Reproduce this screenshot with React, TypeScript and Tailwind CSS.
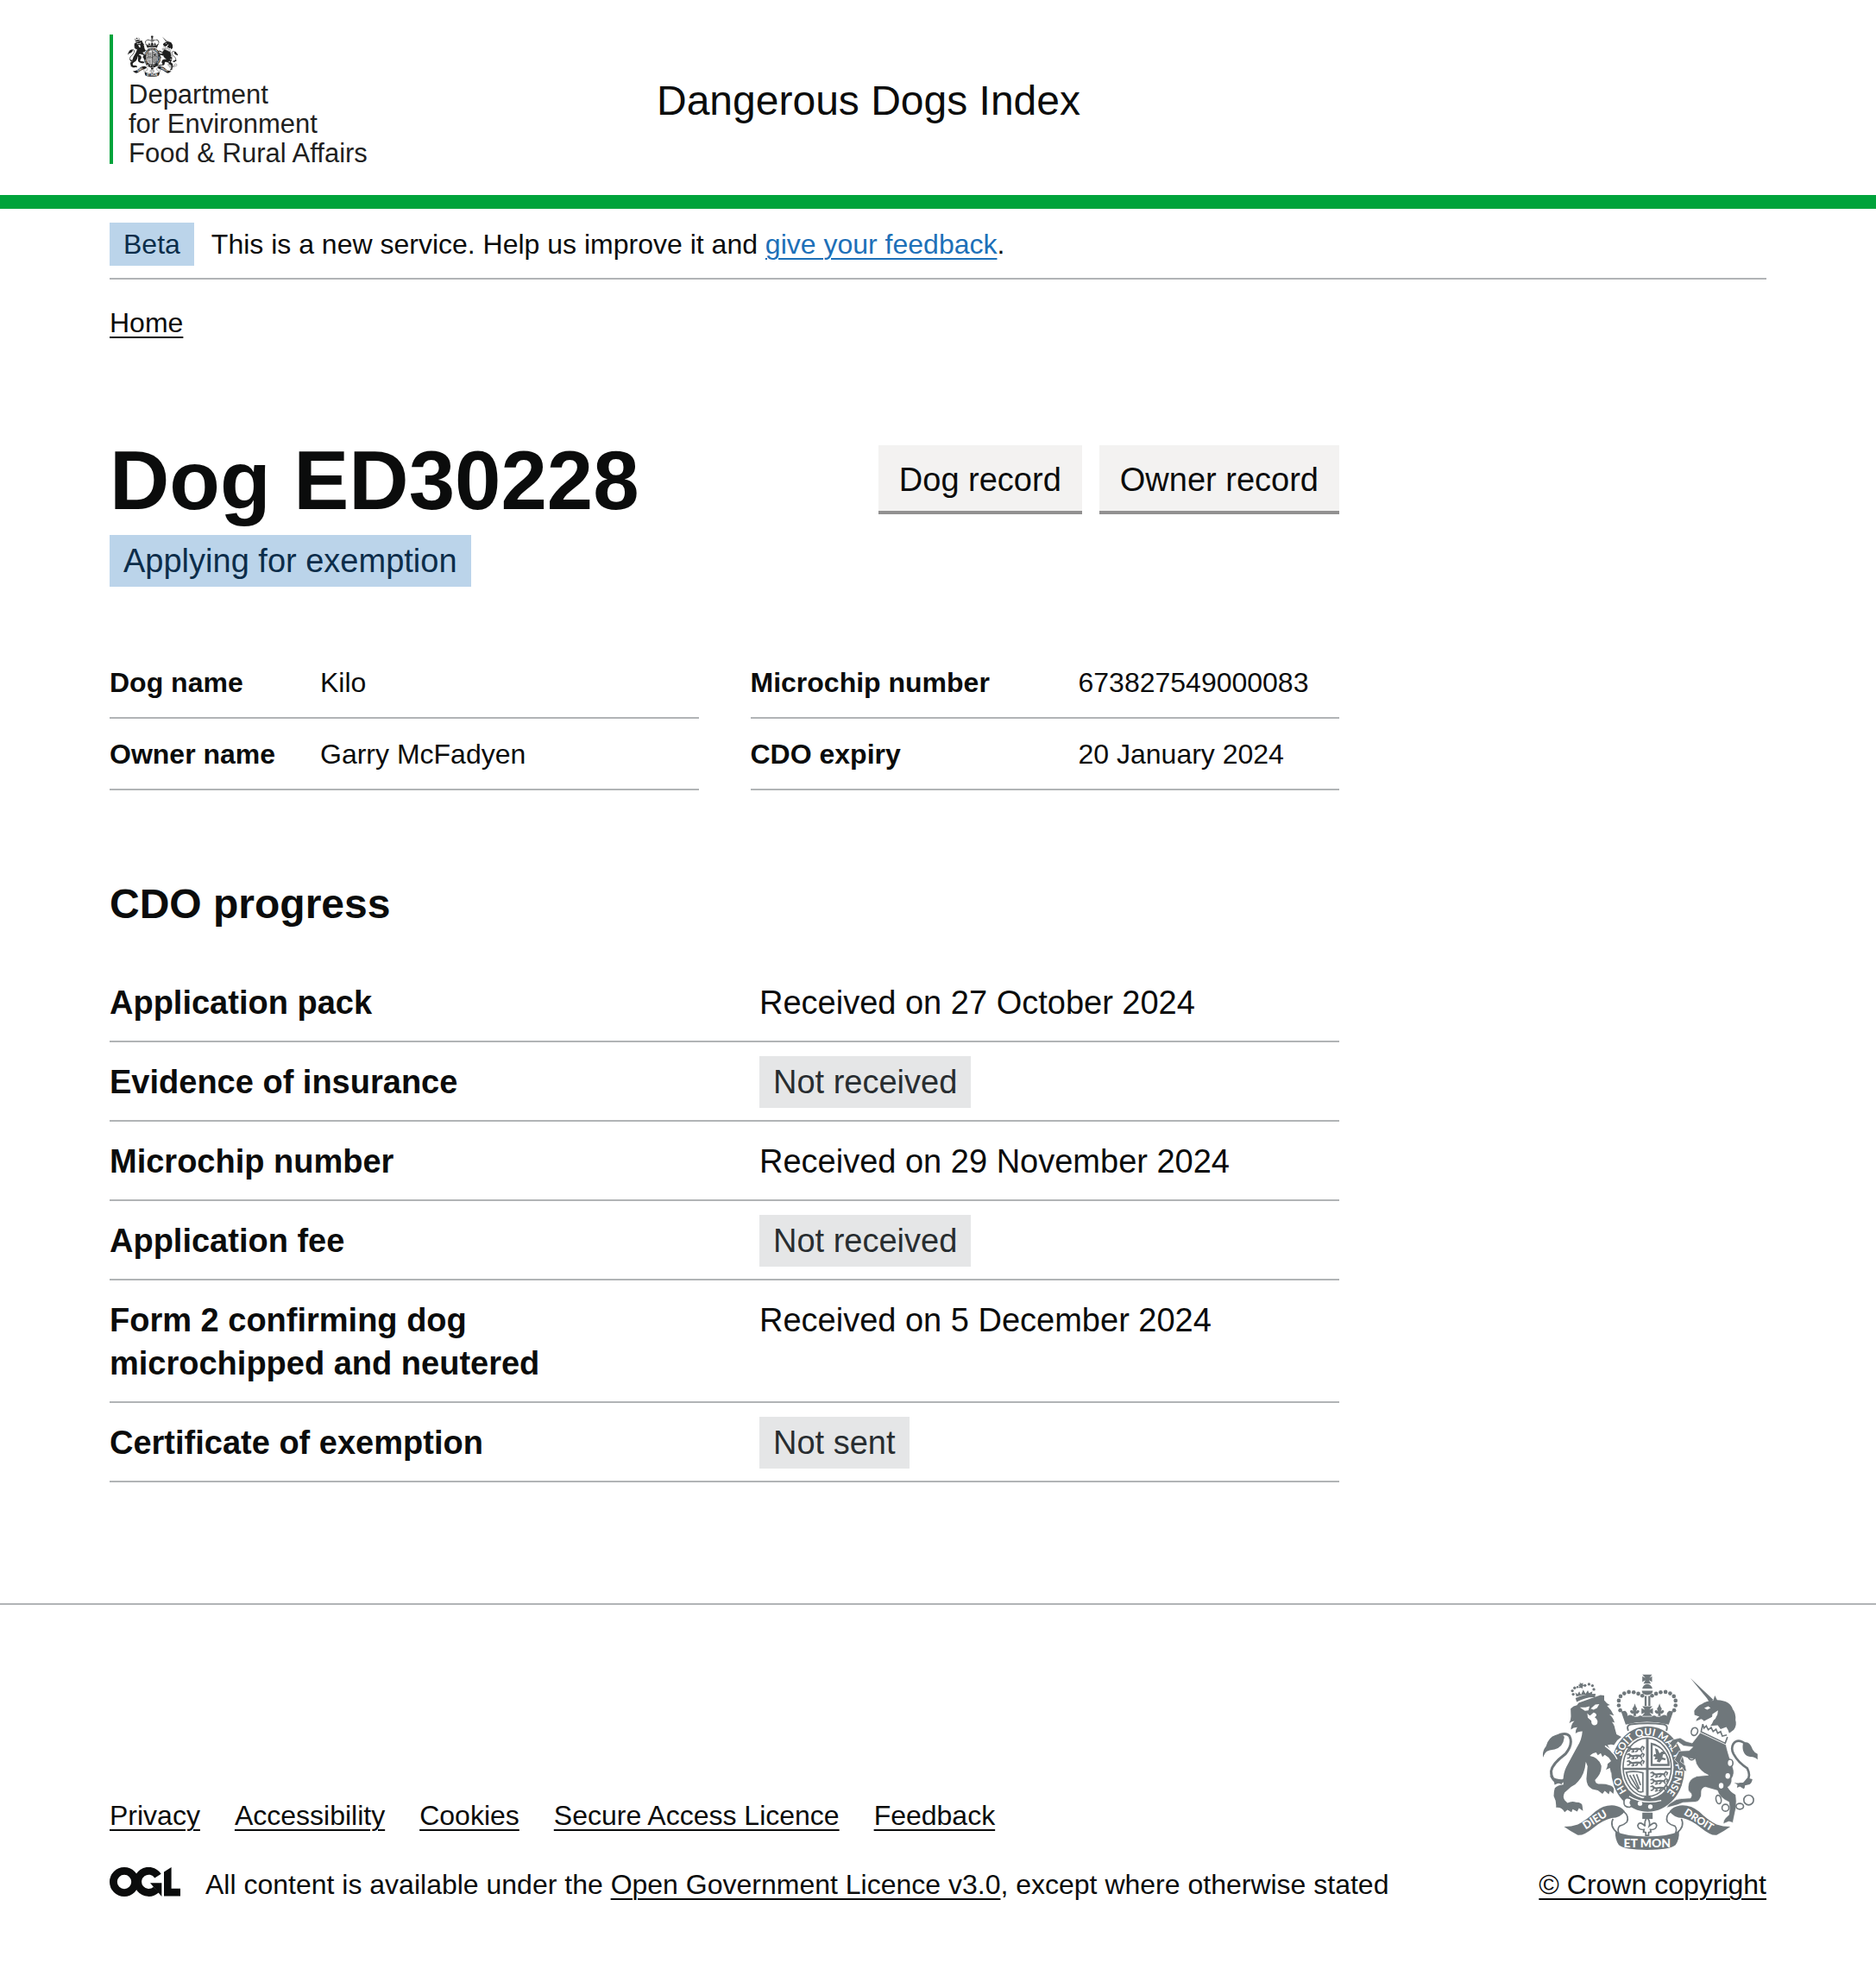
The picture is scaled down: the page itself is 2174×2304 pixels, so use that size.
import type { ReactNode } from "react";

function LionCharge({ x, y }: { x: number; y: number }) {
  return (
    <g transform={`translate(${x} ${y})`} fill="none" stroke="currentColor" strokeWidth="5" strokeLinecap="round">
      <path d="M10 6 18 10 34 8 48 9" strokeWidth="7" />
      <path d="M2 4 8 2 12 7M12 10 8 16 3 17M22 12 24 18 18 19M38 10 36 16 31 18M48 10 52 18M48 8 54 0 60 4 57 11" />
    </g>
  );
}

function Crest({ className, label }: { className: string; label?: string }) {
  const mottoPath = label ? "garter-motto" : "garter-motto-small";
  const arch: [number, number][] = [
    [409, 246], [404, 229], [404, 212], [410, 197], [423, 187], [439, 182], [456, 183], [472, 188], [486, 195],
  ];
  return (
    <svg viewBox="137 119 751 614" className={className} fill="currentColor" role={label ? "img" : undefined} aria-label={label} aria-hidden={label ? undefined : true}>
      {/* imperial crown */}
      <path d="M486 121h34l-9 12 9-6v20l-11-6 7 12h-26l7-12-11 6v-20l11 6z" />
      <path d="M486 170q2-14 17-16 16 2 18 16zM484 178h39q-2 14-20 15-17-1-19-15z" />
      {arch.map(([x, y]) => (
        <g key={`${x}-${y}`}>
          <circle cx={x} cy={y} r="7" />
          <circle cx={1006 - x} cy={y} r="7" />
        </g>
      ))}
      <path d="M494 196h7v34h-7zM507 196h7v34h-7z" />
      <path d="M486 232h35l-10 12 12-5v20l-12-5 10 12h-36l10-12-12 5v-20l12 5z" />
      <path d="M460 222q3 12 8 18-2 5-4 10 8-8 12-1-4 12-12 8v9h-9v-9q-9 4-12-8 5-7 12 1-2-5-4-10 6-6 9-18zM546 222q3 12 8 18-2 5-4 10 8-8 12-1-4 12-12 8v9h-9v-9q-9 4-12-8 5-7 12 1-2-5-4-10 6-6 9-18z" />
      <path d="M412 250l14-2q10 8 8 18 10-8 18-1l9 4 10-1q8-8 16 0h32q9-8 16 0l10 1 9-4q9-7 18 1-3-10 8-18l14 2-16 46q-76-20-150 0z" />
      <path d="M437 317q-8-18 8-22 60-8 116 0 16 4 9 22" fill="none" stroke="currentColor" strokeWidth="6" />

      {/* garter */}
      <ellipse cx="505" cy="451" rx="128" ry="149" />
      <ellipse cx="503" cy="445" rx="92" ry="110" fill="#fff" />
      <ellipse cx="503" cy="445" rx="84" ry="102" fill="none" stroke="currentColor" strokeWidth="5" />
      <defs>
        <path id={mottoPath} d="M438 535A98 116 0 1 1 564 540" />
      </defs>
      <g fill="#fff" fontFamily="Lato, sans-serif" fontWeight="700" fontSize="35" textAnchor="middle">
        <text><textPath href={`#${mottoPath}`} startOffset="7%">HO</textPath></text>
        <text><textPath href={`#${mottoPath}`} startOffset="33%">SOIT</textPath></text>
        <text><textPath href={`#${mottoPath}`} startOffset="48%">QUI</textPath></text>
        <text><textPath href={`#${mottoPath}`} startOffset="63%">MAL</textPath></text>
        <text><textPath href={`#${mottoPath}`} startOffset="73%">Y</textPath></text>
        <text><textPath href={`#${mottoPath}`} startOffset="88%">PENSE</textPath></text>
      </g>

      {/* quartered shield */}
      <path d="M499 345h9v200h-9zM418 446h170v8H418z" />
      <LionCharge x={432} y={372} />
      <LionCharge x={432} y={396} />
      <LionCharge x={432} y={420} />
      <LionCharge x={514} y={460} />
      <LionCharge x={514} y={484} />
      <LionCharge x={514} y={508} />
      <path d="M515 358v82h66q2-22-12-44-20-32-54-38zM522 367v66h52q-2-52-52-66z" fillRule="evenodd" />
      <path d="M530 378l10 4 6 14 8-6 8 0 4 8-8 2-2 10 12 4-2 6-12-2-8 10-10-4 4-8-12 2 4-10-8-2 4-8 6 2z" />
      <path d="M430 462q30-6 58 2v66q-14 4-20-6-28-20-38-62zM442 472l30 50M454 470l22 50M466 469l14 38" fill="none" stroke="currentColor" strokeWidth="5" />
      <path d="M494 548q10-6 20 0l10 12h-40z" />

      {/* buckle */}
      <path d="M440 546q50 30 112 14" fill="none" stroke="#fff" strokeWidth="4" />
      <path d="M444 554q-20-8-22 10-2 20 20 20 6-2 6-8-8-8 0-16z" fill="#fff" stroke="currentColor" strokeWidth="5" />
      <circle cx="478" cy="571" r="8" fill="#fff" />
      <circle cx="514" cy="582" r="8" fill="#fff" />

      {/* lion */}
      <path d="M253 203l4 14q30-18 64-17l2-12q-36 0-70 15z" />
      <path d="M256 198l-4-14 8 6 6-10 6 12 8-18 8 14 8-12 4 10 12-6-2 12q-28-2-54 6z" />
      <circle cx="245" cy="190" r="5" /><circle cx="242" cy="178" r="5" /><circle cx="250" cy="168" r="5" /><circle cx="260" cy="165" r="4" />
      <circle cx="286" cy="159" r="5" /><circle cx="300" cy="155" r="5" /><circle cx="312" cy="160" r="5" /><circle cx="317" cy="173" r="5" />
      <path d="M268 149l6 4 5-3 0 7 6 3-7 3-1 8-5-4-7 2 2-7-5-4 6-3z" />
      <path d="M236 240q10-10 22-12l6-8 42-15 34-12 13 1 0 17q8 12 20 16l-10 3q16 14 24 34l-16-4q14 12 18 29l-9-3q10 14 10 22l6 22 17 9q-16 10-26 28-9-4-22 0l14 26 22 20q10 14 8 30l-4 28-8-20-4 22-8-22-8 14-4-18-14 6q6-8 6-20l12-10-8-12-14-10-8 8-6-14-10 8-6-10q-14 2-22 12 30 4 40 34 2 26-22 50 2 12 12 14 22-2 38 4 16 4 16 16l-2 14-12-10-4 12-14-12-8 10-16-12-20-4q-20-10-20-36l4-44-6-16q-4 44-26 68-10 14-26 20l-22 20q-8 16 0 26l10 10q16-8 30-2 22 0 22 14l2 16-14-10-6 12-16-8-4 10-14-8-10 8q-10-18-30-16 2-22-8-40 0-18 4-28 10-10 30-12-4-34 10-62l38-70q16-24 18-54-16 0-24 8 0-14 6-22-14 0-22 8 0-18 12-30-12 2-18 8 6-12 6-24z" />
      <path d="M268 236l20 0 14-4-4 14-12 2zM306 240l16-14 14-2-8 14-12 6zM294 256q6 8 10 8l12-10q10 2 10 10l-6 6q10 6 10 14 0 14-10 14-12 0-12-16l-12-10z" fill="#fff" />
      <path d="M356 370q30 20 42 46" fill="none" stroke="#fff" strokeWidth="4" />
      <path d="M140 410q-4-22 10-38 8-32 34-40 30-4 30 8-4 34-34 42-20 2-28 8-8 8-12 20z" />
      <path d="M184 338q34-18 48-2 14 28-14 62-46 34-50 60 0 34 26 38 20 0 28-22" fill="none" stroke="currentColor" strokeWidth="9" />
      <path d="M162 474q30 16 54 12l-12 18-10-4-14 6-2-12z" />

      {/* unicorn */}
      <path d="M654 134l80 75-14 9-8-13z" />
      <path d="M668 262l-1-14q12-20 26-24 16-12 40-12l6-18 8 16q46 2 54 32 12 14 10 38 6 18-6 34l-16 12q-4-14-10-22l-20 8-10-14-26 2q14-14 12-34l-34 18q-4-8-10-8l-18 8q2-10 12-16z" />
      <path d="M702 238l14-6 8 6-12 6zM750 246q0 34-36 46-16 2-22-6l24-4q16-6 14-22z" fill="#fff" />
      <path d="M697 294l4 14 8-8 7 14 10-8 7 14 10-8 6 14 10-6 6 16 16-4M697 294l-6 27 84 40 8-22" fill="none" stroke="currentColor" strokeWidth="5" />
      <path d="M688 324l90 42q6 30 24 80 8 20-4 38 2 20-14 30 10 18 28 26 4 22 0 50l-6 28-4 20-14-4-20 8q0-12 8-20l12-12q4-24 0-44-34-16-40-40l-42-12q-14 2-14 18 2 14-6 24-6 10-16 10l-42 2-20 8-38 10q8-16 20-20 14-12 32-12l32-2q6-8 2-16-14-10-10-24 0-26 30-36l40-4q-28-12-42-40l-4-16-22-2-22-8-8 18 18 14 4 20-8 0-8-14-8 10-6-24-12-12 16-30 36-2 12-12-32-4-20-14-16 22-6 2-2-14-8-2 14-16 26-6 20 12 22 6z" stroke="#fff" strokeWidth="2" />
      <path d="M838 360q18-8 28 12 6 20 22 26v20q-10-10-26-10-18-2-24-20-4-16 0-28z" />
      <path d="M850 366q-30-24-46-4-10 16 0 36 16 30 48 50 14 28-2 46-10 12-26 8" fill="none" stroke="currentColor" strokeWidth="8" />
      <path d="M806 498q16 4 32 0l14-16 18 4q-2 14-10 18l-16 4q0 8-4 12l-14-8-10 4 2-10z" />
      <g fill="none" stroke="currentColor" strokeWidth="5">
        <ellipse cx="668" cy="320" rx="11" ry="14" transform="rotate(20 668 320)" />
        <ellipse cx="658" cy="404" rx="12" ry="15" />
        <ellipse cx="792" cy="430" rx="10" ry="13" fill="#fff" />
        <ellipse cx="752" cy="557" rx="9" ry="15" transform="rotate(-12 752 557)" />
        <circle cx="776" cy="586" r="12" />
        <ellipse cx="826" cy="581" rx="13" ry="10" />
        <circle cx="857" cy="559" r="17" />
      </g>
      <ellipse cx="652" cy="344" rx="7" ry="10" fill="#fff" />
      <ellipse cx="784" cy="475" rx="8" ry="10" fill="#fff" />
      <ellipse cx="761" cy="509" rx="8" ry="10" fill="#fff" />

      {/* motto ribbon */}
      {["", "matrix(-1 0 0 1 1006 0)"].map((mirror) => (
        <g key={mirror} transform={mirror || undefined}>
          <path d="M213 652q26 0 48-8 30-14 60-44 32-26 68-22 24 4 36 20-14 22-46 24-32 8-64 34-34 28-54 25-26-13-48-29z" />
          <path d="M420 598q22 18 12 38-10 10-26 14-8 10-2 24M384 624q-14 26 16 50" fill="none" stroke="currentColor" strokeWidth="5" />
        </g>
      ))}
      <path d="M392 668q40 18 111 18t111-18q2 26-12 48-20 17-99 17t-99-17q-14-22-12-48z" />
      <path d="M486 603h36v22h-36z" />
      <path d="M503 620q12 14 7 30 22-20 26-2-2 16-22 14l2 8-8 2v10h-10v-10l-8-2 2-8q-20 2-22-14 6-18 26 2-5-16 7-30z" fill="#fff" stroke="currentColor" strokeWidth="5" />
      <g fill="#fff" fontFamily="Lato, sans-serif" fontWeight="900" textAnchor="middle">
        <text x="503" y="724" fontSize="42">ET MON</text>
        <text x="327" y="638" fontSize="38" transform="rotate(-32 327 638)">DIEU</text>
        <text x="677" y="638" fontSize="36" transform="rotate(32 677 638)">DROIT</text>
      </g>
    </svg>
  );
}

function OglLogo() {
  return (
    <svg viewBox="0 0 82 34" className="h-[34px] w-[82px] shrink-0" fill="none" stroke="currentColor" role="img" aria-label="OGL">
      <circle cx="17" cy="17" r="12.6" strokeWidth="8.8" />
      <path d="M56 10.2A12.6 12.6 0 1 0 54 26" strokeWidth="8.8" />
      <path d="M47 18.2h13.4V34l-13.4-15.8z" fill="currentColor" stroke="none" />
      <path d="M63 5.6 71.6 0v24.8H82v8.6H63z" fill="currentColor" stroke="none" />
    </svg>
  );
}

function TextLink({ children }: { children: ReactNode }) {
  return (
    <a href="#" className="underline decoration-2 underline-offset-[5px]">
      {children}
    </a>
  );
}

function RecordButton({ children }: { children: ReactNode }) {
  return (
    <button type="button" className="bg-[#f3f2f1] px-6 pt-[15px] pb-[11px] text-[38px] leading-[50px] shadow-[0_4px_0_#929191]">
      {children}
    </button>
  );
}

function SummaryList({ rows, labelClass }: { rows: [string, string][]; labelClass: string }) {
  return (
    <dl className="flex-1 text-[32px] leading-10">
      {rows.map(([label, value]) => (
        <div key={label} className="flex border-b-2 border-[#b1b4b6] pt-[21px] pb-5">
          <dt className={`${labelClass} shrink-0 font-bold`}>{label}</dt>
          <dd>{value}</dd>
        </div>
      ))}
    </dl>
  );
}

const progress: { label: string; received?: string; status?: string }[] = [
  { label: "Application pack", received: "Received on 27 October 2024" },
  { label: "Evidence of insurance", status: "Not received" },
  { label: "Microchip number", received: "Received on 29 November 2024" },
  { label: "Application fee", status: "Not received" },
  { label: "Form 2 confirming dog microchipped and neutered", received: "Received on 5 December 2024" },
  { label: "Certificate of exemption", status: "Not sent" },
];

const footerLinks = ["Privacy", "Accessibility", "Cookies", "Secure Access Licence", "Feedback"];

export default function App() {
  return (
    <div className="bg-white font-['Liberation_Sans',Arial,sans-serif] text-[#0b0c0c]">
      <header className="border-b-[16px] border-[#00a33b]">
        <div className="mx-auto flex max-w-[1980px] items-center px-[30px] pt-10 pb-9">
          <div className="w-[634px] shrink-0">
            <div className="h-[150px] border-l-4 border-[#00a33b] pl-[18px] text-[#1f1f1f]">
              <Crest className="-ml-px h-[50px] w-[58px]" />
              <p className="pt-[3px] text-[31px] leading-[34px]">
                Department
                <br />
                for Environment
                <br />
                Food &amp; Rural Affairs
              </p>
            </div>
          </div>
          <a href="#" className="pt-[3px] text-5xl leading-[60px]">
            Dangerous Dogs Index
          </a>
        </div>
      </header>

      <div className="mx-auto max-w-[1980px] px-[30px]">
        <div className="flex items-center gap-5 border-b-2 border-[#b1b4b6] pt-4 pb-3.5 text-[32px] leading-10">
          <strong className="bg-[#bbd4ea] px-4 py-[5px] font-normal text-[#0c2d4a]">Beta</strong>
          <p>
            This is a new service. Help us improve it and{" "}
            <span className="text-[#1d70b8]">
              <TextLink>give your feedback</TextLink>
            </span>
            .
          </p>
        </div>
        <nav aria-label="Breadcrumb" className="pt-[30px] text-[32px] leading-10">
          <TextLink>Home</TextLink>
        </nav>
      </div>

      <div className="mx-auto max-w-[1980px]">
        <main className="w-3/4 px-[30px] pt-[113px] pb-[140px]">
          <div className="flex items-center justify-between">
            <h1 className="text-8xl leading-[100px] font-bold">Dog ED30228</h1>
            <div className="flex gap-5 pb-1.5">
              <RecordButton>Dog record</RecordButton>
              <RecordButton>Owner record</RecordButton>
            </div>
          </div>
          <strong className="mt-[13px] block w-fit bg-[#bbd4ea] px-4 py-[5px] text-[38px] leading-[50px] font-normal text-[#0c2d4a]">
            Applying for exemption
          </strong>

          <div className="mt-[70px] flex gap-[60px]">
            <SummaryList labelClass="w-[244px]" rows={[["Dog name", "Kilo"], ["Owner name", "Garry McFadyen"]]} />
            <SummaryList labelClass="w-[380px]" rows={[["Microchip number", "673827549000083"], ["CDO expiry", "20 January 2024"]]} />
          </div>

          <h2 className="mt-[102px] text-5xl leading-[60px] font-bold">CDO progress</h2>
          <dl className="mt-[38px] text-[38px] leading-[50px]">
            {progress.map(({ label, received, status }) => (
              <div key={label} className="flex border-b-2 border-[#b1b4b6] pt-[21px] pb-[19px]">
                <dt className="w-[753px] shrink-0 pr-[200px] font-bold">{label}</dt>
                <dd>
                  {received}
                  {status && (
                    <strong className="-my-[5px] block bg-[#e5e6e7] px-4 py-[5px] font-normal text-[#282d30]">{status}</strong>
                  )}
                </dd>
              </div>
            ))}
          </dl>
        </main>
      </div>

      <footer className="border-t-2 border-[#b1b4b6] text-[32px] leading-10">
        <div className="mx-auto flex max-w-[1980px] items-end justify-between px-[30px] pt-20 pb-[100px]">
          <div>
            <ul className="flex gap-10">
              {footerLinks.map((link) => (
                <li key={link}>
                  <TextLink>{link}</TextLink>
                </li>
              ))}
            </ul>
            <div className="mt-10 flex items-start gap-[29px]">
              <OglLogo />
              <p>
                All content is available under the <TextLink>Open Government Licence v3.0</TextLink>, except where otherwise stated
              </p>
            </div>
          </div>
          <div className="flex w-[271px] flex-col gap-5 text-right">
            <Crest className="mx-auto h-[204px] w-[250px] text-[#6f777b]" label="Royal coat of arms" />
            <div>
              <TextLink>© Crown copyright</TextLink>
            </div>
          </div>
        </div>
      </footer>
    </div>
  );
}
